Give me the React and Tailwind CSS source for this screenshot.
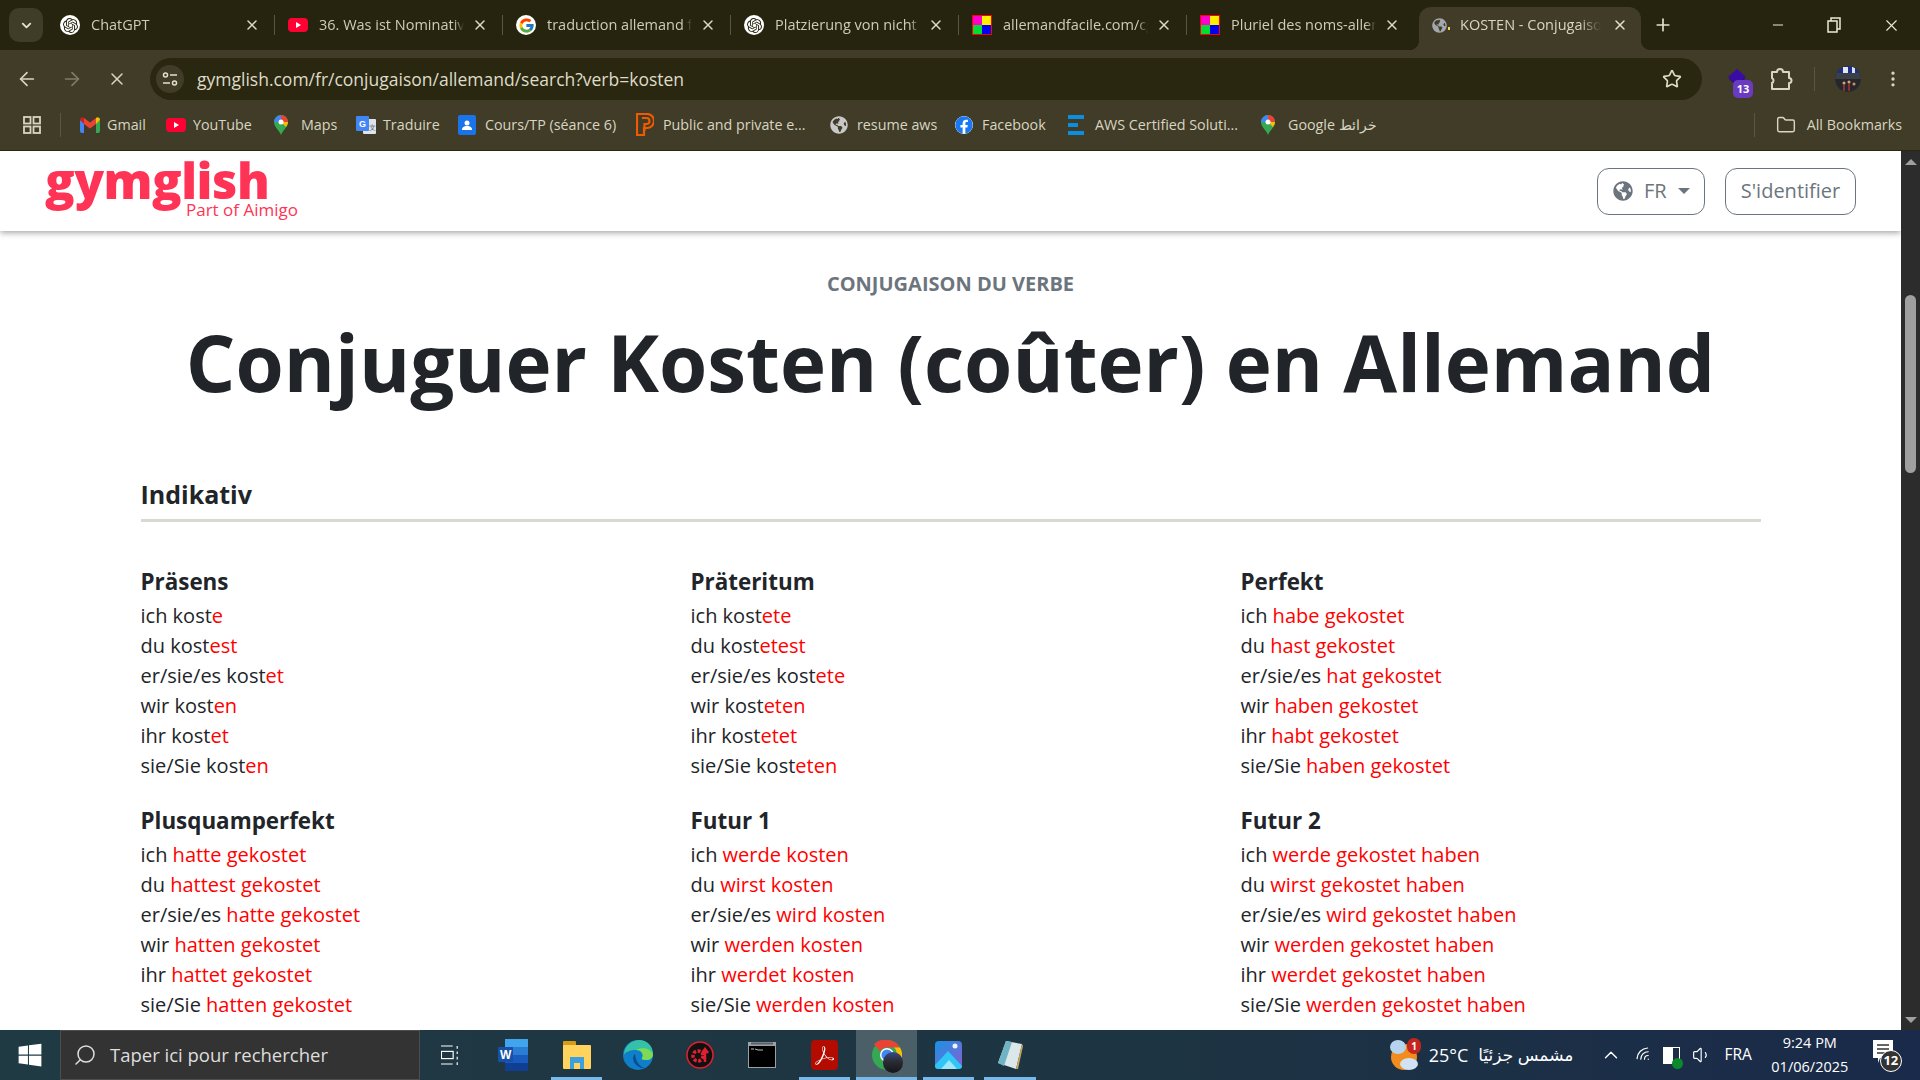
import React from "react";
import { SiOpenai, SiAdobeacrobatreader } from "react-icons/si";
import { FcGoogle } from "react-icons/fc";
import { FaFacebook, FaWindows, FaGlobeAmericas } from "react-icons/fa";
import { ArrowLeft, ArrowRight, X, Plus, Minus, Star, EllipsisVertical, Search, ChevronDown, ChevronUp, Folder, Wifi, Volume1 } from "lucide-react";

const UI = "font-['Open_Sans','Noto_Sans',sans-serif]";

const Gpt = () => (
  <span className="flex h-[20px] w-[20px] items-center justify-center rounded-full bg-white text-[#26240e]"><SiOpenai size={15} /></span>
);
const Yt = ({ s = 20 }) => (
  <svg width={s} height={s} viewBox="0 0 20 20"><rect x="0" y="3" width="20" height="14" rx="4" fill="#ff0033" /><path d="M8 7l5 3-5 3z" fill="#fff" /></svg>
);
const G = () => (
  <span className="flex h-[20px] w-[20px] items-center justify-center rounded-full bg-white"><FcGoogle size={17} /></span>
);
const Mosaic = () => (
  <svg width="20" height="20" viewBox="0 0 20 20"><rect width="20" height="20" fill="#ff0000" /><rect x="1" y="1" width="9" height="9" fill="#ff00cc" /><rect x="10" y="1" width="9" height="9" fill="#ffee00" /><rect x="1" y="10" width="9" height="9" fill="#00dd33" /><rect x="10" y="10" width="9" height="9" fill="#0000ee" /></svg>
);
const Pin = () => (
  <svg width="14" height="20" viewBox="0 0 14 20"><path d="M7 20C5 15 0 12 0 7a7 7 0 0 1 14 0c0 5-5 8-7 13z" fill="#34a853" /><path d="M2 2.500A7 7 0 0 1 7 0v7H0a7 7 0 0 1 2-4.500z" fill="#4285f4" /><path d="M7 0a7 7 0 0 1 7 7H7z" fill="#ea4335" /><path d="M14 7c0 2-1 3.500-2 5L7 7z" fill="#fbbc04" /><circle cx="7" cy="7" r="2.500" fill="#fff" /></svg>
);
const Gmail = () => (
  <svg width="20" height="16" viewBox="0 0 20 16"><path d="M0 3v11a2 2 0 0 0 2 2h2V6z" fill="#4285f4" /><path d="M20 3v11a2 2 0 0 1-2 2h-2V6z" fill="#34a853" /><path d="M16 1v6l-6 4.500L4 7V1l6 4.500z" fill="#ea4335" /><path d="M0 3c0-2.500 2.500-3.500 4-2v6z" fill="#c5221f" /><path d="M20 3c0-2.500-2.500-3.500-4-2v6z" fill="#fbbc04" /></svg>
);
const Translate = () => (
  <svg width="20" height="20" viewBox="0 0 20 20"><rect x="7" y="4" width="13" height="15" rx="1" fill="#dfe3ea" /><rect x="0" y="1" width="13" height="15" rx="1" fill="#4285f4" /><text x="3" y="12" fontSize="9" fontWeight="700" fill="#fff" fontFamily="Liberation Sans">G</text><text x="13" y="15" fontSize="7" fill="#555" fontFamily="Liberation Sans">文</text></svg>
);
const Cours = () => (
  <svg width="18" height="20" viewBox="0 0 18 20"><rect width="18" height="20" rx="2" fill="#1a73e8" /><circle cx="9" cy="8" r="2.500" fill="#fff" /><path d="M4 15c0-3 2-4 5-4s5 1 5 4z" fill="#fff" /></svg>
);
const Pub = () => (
  <svg width="18" height="24" viewBox="0 0 18 24"><path d="M1 1h10a6 6 0 0 1 0 14H8v7H1z" fill="none" stroke="#f05a00" strokeWidth="2.200" /><path d="M6 5h4.500a3 3 0 0 1 0 6H8.500v7" fill="none" stroke="#f05a00" strokeWidth="2.200" /></svg>
);
const Aws = () => (
  <svg width="16" height="20" viewBox="0 0 16 20"><rect width="16" height="4" fill="#0a8fe0" /><rect x="0" y="8" width="10" height="4" fill="#0a8fe0" /><rect y="16" width="16" height="4" fill="#0a8fe0" /></svg>
);
const LoadGlobe = () => (
  <span className="relative flex h-[16px] w-[16px] items-center justify-center text-[#a3a7ae]"><FaGlobeAmericas size={15} /><span className="absolute -right-[3px] bottom-[3px] h-[3px] w-[2px] bg-[#f2d94e]" /></span>
);

const tabs = [
  { icon: <Gpt />, t: "ChatGPT" },
  { icon: <Yt />, t: "36. Was ist Nominativ, Akkusativ" },
  { icon: <G />, t: "traduction allemand français" },
  { icon: <Gpt />, t: "Platzierung von nicht" },
  { icon: <Mosaic />, t: "allemandfacile.com/cgi2/myexam" },
  { icon: <Mosaic />, t: "Pluriel des noms-allemand" },
];

function Tab({ icon, t, last }) {
  return (
    <div className="relative flex h-[42px] w-[228px] shrink-0 items-center pl-[13px]">
      <span className="flex w-[31px] shrink-0">{icon}</span>
      <span className="w-[145px] overflow-hidden whitespace-nowrap text-[14.5px] text-[#cfcbb6] [mask-image:linear-gradient(to_right,black_93%,transparent)]">{t}</span>
      <span className="ml-[6px] flex w-[20px] justify-center text-[#dcd9c6]"><X size={16} strokeWidth={2.2} /></span>
      {!last && <span className="absolute right-0 top-[11px] h-[20px] w-px bg-[#5a5740]" />}
    </div>
  );
}

const marks = [
  { icon: <Gmail />, t: "Gmail", w: "w-[86px]" },
  { icon: <Yt />, t: "YouTube", w: "w-[108px]" },
  { icon: <Pin />, t: "Maps", w: "w-[82px]" },
  { icon: <Translate />, t: "Traduire", w: "w-[102px]" },
  { icon: <Cours />, t: "Cours/TP (séance 6)", w: "w-[178px]" },
  { icon: <Pub />, t: "Public and private e...", w: "w-[194px]" },
  { icon: <FaGlobeAmericas size={18} className="text-[#c8c8c8]" />, t: "resume aws", w: "w-[125px]" },
  { icon: <FaFacebook size={18} className="rounded-full bg-white text-[#1877f2]" />, t: "Facebook", w: "w-[113px]" },
  { icon: <Aws />, t: "AWS Certified Soluti...", w: "w-[193px]" },
  { icon: <Pin />, t: "Google خرائط", w: "w-[120px]" },
];

const SiteIcon = () => (
  <svg width="16" height="16" viewBox="0 0 16 16" fill="none" stroke="currentColor" strokeWidth="1.500"><circle cx="3.500" cy="4" r="2" /><path d="M8 4h7M1 12h7" /><circle cx="12.500" cy="12" r="2" /></svg>
);
const PuzzleIcon = () => (
  <svg width="24" height="26" viewBox="0 0 24 26" fill="none" stroke="currentColor" strokeWidth="2" strokeLinejoin="round"><path d="M3 6h5a3 3 0 0 1 6 0h6v6a2.500 2.500 0 0 1 0 5v6H3v-6a2.800 2.800 0 0 0 0-5z" /></svg>
);
const Avatar = () => (
  <svg width="26" height="26" viewBox="0 0 26 26" className="rounded-full">
    <rect width="26" height="26" fill="#25272c" />
    <rect y="0" width="26" height="7" fill="#1c2f8a" />
    <rect x="8" y="1" width="5" height="6" fill="#e4e7ee" />
    <rect x="17" y="1" width="3" height="6" fill="#d8e4f2" />
    <rect y="7" width="26" height="6" fill="#3b3f46" />
    <circle cx="9" cy="17" r="1.500" fill="#e0a070" />
    <circle cx="14" cy="16" r="1.500" fill="#e0a070" />
    <circle cx="19" cy="18" r="1.500" fill="#d88a60" />
    <path d="M9 19v6M14 18v7" stroke="#a33" strokeWidth="1.500" />
  </svg>
);

function ChromeTop() {
  return (
    <div className={`${UI} shrink-0`}>
      <div className="flex h-[50px] items-end bg-[#26240e]">
        <div className="mb-[8px] ml-[9px] mr-[4px] flex h-[34px] w-[34px] items-center justify-center rounded-[10px] bg-[#3f3c27] text-[#e3e0cc]"><ChevronDown size={15} strokeWidth={3} /></div>
        {tabs.map((x, i) => <div key={i} className="mb-[4px]"><Tab {...x} last={i === 5} /></div>)}
        <div className="relative ml-[4px] flex h-[43px] w-[222px] shrink-0 items-center rounded-t-[12px] bg-[#403c27] pb-[7px] pl-[12px]">
          <span className="absolute -left-[10px] bottom-0 h-[10px] w-[10px] bg-[radial-gradient(circle_at_0_0,#26240e_10px,#403c27_10.500px)]" />
          <span className="absolute -right-[10px] bottom-0 h-[10px] w-[10px] bg-[radial-gradient(circle_at_100%_0,#26240e_10px,#403c27_10.500px)]" />
          <span className="flex w-[29px] shrink-0"><LoadGlobe /></span>
          <span className="w-[141px] overflow-hidden whitespace-nowrap text-[14.5px] text-[#d8d5c2] [mask-image:linear-gradient(to_right,black_85%,transparent)]">KOSTEN - Conjugaison</span>
          <span className="ml-[9px] flex w-[20px] justify-center text-[#e3e0cc]"><X size={16} strokeWidth={2.2} /></span>
        </div>
        <div className="mb-[15px] ml-[12px] text-[#e3e0cc]"><Plus size={20} /></div>
        <div className="ml-auto flex h-[50px] items-center text-[#ece9d8]">
          <span className="flex w-[56px] justify-center"><Minus size={16} strokeWidth={1.5} /></span>
          <span className="flex w-[56px] justify-center">
            <svg width="14" height="16" viewBox="0 0 14 16" fill="none" stroke="currentColor" strokeWidth="1.500"><rect x="1" y="4" width="9" height="11" /><path d="M4 4V1h9v11h-3" /></svg>
          </span>
          <span className="flex w-[58px] justify-center"><X size={19} strokeWidth={1.4} /></span>
        </div>
      </div>
      <div className="flex h-[50px] items-end bg-[#403c27] pb-0">
        <div className="flex h-[42px] w-[150px] items-center text-[#d8d5c2]">
          <span className="ml-[16px] flex w-[45px] justify-start"><ArrowLeft size={22} strokeWidth={1.8} /></span>
          <span className="flex w-[46px] justify-start text-[#807c66]"><ArrowRight size={22} strokeWidth={1.8} /></span>
          <span className="flex justify-start"><X size={20} strokeWidth={1.8} /></span>
        </div>
        <div className="flex h-[42px] w-[1552px] items-center rounded-full bg-[#2a2710]">
          <span className="ml-[6px] flex h-[28px] w-[28px] items-center justify-center rounded-full bg-[#403c27] text-[#e3e0cc]"><SiteIcon /></span>
          <span className="ml-[13px] text-[17.500px] text-[#dedbc8]">gymglish.com/fr/conjugaison/allemand/search?verb=kosten</span>
          <span className="ml-auto mr-[20px] text-[#dedbc8]"><Star size={20} strokeWidth={2} /></span>
        </div>
        <div className="flex h-[42px] flex-1 items-center text-[#d8d5c2]">
          <span className="relative ml-[24px] flex h-[24px] w-[22px] items-center">
            <svg width="22" height="22" viewBox="0 0 22 22"><path d="M3 11l8 7 8-7-8-7z" fill="#2a0a8a" /><path d="M11 1l9 8-9 8-9-8z" fill="#3a0ca3" /></svg>
            <span className="absolute -bottom-[7px] left-[7px] flex h-[18px] w-[20px] items-center justify-center rounded-[5px] bg-[#6a3bc0] text-[11px] font-bold text-white">13</span>
          </span>
          <span className="ml-[21px] flex w-[24px] justify-center"><PuzzleIcon /></span>
          <span className="ml-[21px] h-[24px] w-px bg-[#5a5740]" />
          <span className="ml-[20px] flex h-[26px] w-[26px] overflow-hidden rounded-full"><Avatar /></span>
          <span className="ml-[22px] flex justify-center"><EllipsisVertical size={20} /></span>
        </div>
      </div>
      <div className="flex h-[50px] items-center bg-[#403c27] pb-[1px] text-[14.300px] text-[#d8d5c2]">
        <svg className="ml-[23px]" width="18" height="18" viewBox="0 0 18 18" fill="none" stroke="currentColor" strokeWidth="1.800"><rect x="1" y="1" width="6.500" height="6.500" /><rect x="10.500" y="1" width="6.500" height="6.500" /><rect x="1" y="10.500" width="6.500" height="6.500" /><rect x="10.500" y="10.500" width="6.500" height="6.500" /></svg>
        <span className="ml-[19px] mr-[19px] h-[24px] w-px bg-[#5a5740]" />
        {marks.map((m) => (
          <div key={m.t} className={`flex items-center ${m.w} shrink-0`}>
            <span className="flex w-[27px] shrink-0 items-center">{m.icon}</span>
            <span className="whitespace-nowrap">{m.t}</span>
          </div>
        ))}
        <span className="ml-auto h-[24px] w-px bg-[#5a5740]" />
        <span className="ml-[21px] flex w-[31px] items-center"><Folder size={20} strokeWidth={1.7} /></span>
        <span className="mr-[18px] whitespace-nowrap">All Bookmarks</span>
      </div>
      <div className="h-px bg-[#2a2710]" />
    </div>
  );
}

const P = ["ich", "du", "er/sie/es", "wir", "ihr", "sie/Sie"];
const blocks = [
  { h: "Präsens", s: "kost", e: ["e", "est", "et", "en", "et", "en"] },
  { h: "Präteritum", s: "kost", e: ["ete", "etest", "ete", "eten", "etet", "eten"] },
  { h: "Perfekt", s: "", e: ["habe gekostet", "hast gekostet", "hat gekostet", "haben gekostet", "habt gekostet", "haben gekostet"] },
  { h: "Plusquamperfekt", s: "", e: ["hatte gekostet", "hattest gekostet", "hatte gekostet", "hatten gekostet", "hattet gekostet", "hatten gekostet"] },
  { h: "Futur 1", s: "", e: ["werde kosten", "wirst kosten", "wird kosten", "werden kosten", "werdet kosten", "werden kosten"] },
  { h: "Futur 2", s: "", e: ["werde gekostet haben", "wirst gekostet haben", "wird gekostet haben", "werden gekostet haben", "werdet gekostet haben", "werden gekostet haben"] },
];

function Block({ h, s, e }) {
  return (
    <div>
      <h3 className="mb-[1px] h-[37px] text-[22.400px] font-bold leading-[38px] text-[#212529]">{h}</h3>
      {P.map((p, i) => (
        <div key={i} className="h-[30px] text-[20px] leading-[30px] text-[#212529]">
          {p} {s}<span className="text-[#ff0000]">{e[i]}</span>
        </div>
      ))}
    </div>
  );
}

function Page() {
  return (
    <div className="flex min-h-0 flex-1 bg-white font-['Open_Sans',sans-serif]">
      <div className="min-w-0 flex-1 overflow-hidden">
        <header className="flex h-[80px] items-center bg-white pl-[45px] pr-[45px] shadow-[0_2px_6px_rgba(0,0,0,0.35)]">
          <div className="relative h-[72px] w-[300px]">
            <div className="absolute left-0 -top-[6px] text-[49px] font-extrabold leading-[62px] tracking-[-0.5px] text-[#ff3355]">gymglish</div>
            <div className="absolute left-[141px] top-[43px] text-[17px] leading-[24px] text-[#ff3355]">Part of Aimigo</div>
          </div>
          <div className="ml-auto flex h-[47px] w-[108px] items-center rounded-[12px] border border-[#6c757d] pl-[15px] text-[20px] text-[#6c757d]">
            <FaGlobeAmericas size={20} />
            <span className="ml-[11px]">FR</span>
            <span className="ml-[11px] h-0 w-0 border-x-[6px] border-t-[6px] border-x-transparent border-t-[#6c757d]" />
          </div>
          <div className="ml-[20px] flex h-[47px] w-[131px] items-center justify-center rounded-[12px] border border-[#6c757d] text-[20px] text-[#6c757d]">S'identifier</div>
        </header>
        <main className="text-center">
          <div className="mt-[39px] text-[20px] font-bold leading-[28px] text-[#6c757d]">CONJUGAISON DU VERBE</div>
          <h1 className="mt-[17px] text-[78px] font-bold leading-[94px] text-[#212529]">Conjuguer Kosten (coûter) en Allemand</h1>
        </main>
        <section className="ml-[140.500px] mt-[67px] w-[1620.500px]">
          <h2 className="h-[36px] text-[25px] font-bold leading-[36px] text-[#212529]">Indikativ</h2>
          <div className="mt-[7px] h-[3px] bg-[#d8d8d4]" />
          <div className="mt-[41px] grid grid-cols-[550px_550px_520px] gap-y-[21.400px]">
            {blocks.map((b) => <Block key={b.h} {...b} />)}
          </div>
        </section>
      </div>
      <div className="flex w-[19px] shrink-0 flex-col items-center bg-[#2c2c2c]">
        <span className="mt-[8px] h-0 w-0 border-x-[6px] border-b-[6px] border-x-transparent border-b-[#a0a0a0]" />
        <span className="mt-[130px] h-[178px] w-[11px] rounded-full bg-[#9f9f9f]" />
        <span className="mt-auto mb-[7px] h-0 w-0 border-x-[6px] border-t-[6px] border-x-transparent border-t-[#a0a0a0]" />
      </div>
    </div>
  );
}

const Word = () => (
  <svg width="30" height="32" viewBox="0 0 30 32"><rect x="7" y="0" width="23" height="8" fill="#41a5ee" /><rect x="7" y="8" width="23" height="8" fill="#2b7cd3" /><rect x="7" y="16" width="23" height="8" fill="#185abd" /><rect x="7" y="24" width="23" height="8" fill="#103f91" /><rect x="0" y="8" width="15" height="15" rx="1" fill="#1650a8" /><text x="2" y="20" fontSize="12" fontWeight="700" fill="#fff" fontFamily="Liberation Sans">W</text></svg>
);
const Explorer = () => (
  <svg width="28" height="28" viewBox="0 0 28 28"><rect x="0" y="0" width="13" height="6" rx="1" fill="#d99a14" /><rect x="0" y="4" width="28" height="24" rx="1" fill="#ffd35c" /><rect x="7" y="16" width="14" height="12" fill="#3b9fe0" /><rect x="11" y="22" width="6" height="6" fill="#ffd35c" /></svg>
);
const Edge = () => (
  <svg width="30" height="30" viewBox="0 0 30 30"><circle cx="15" cy="15" r="15" fill="#0f7fc9" /><path d="M1 15C1 5 10 0 16 0c8 0 14 6 14 14 0 4-3 6-7 6-3 0-5-1-4-2 2-3 0-8-6-8-6 0-11 2-12 5z" fill="#35c1a8" /><path d="M30 14c0 4-3 6-7 6-3 0-5-1-4-2 2-3 0-8-6-8 6-3 14-2 17 4z" fill="#7ed957" /><path d="M10 18c0 6 6 11 12 10-5-1-9-6-10-14-1 1-2 2-2 4z" fill="#0a4f94" /></svg>
);
const Driver = () => (
  <svg width="28" height="28" viewBox="0 0 28 28"><circle cx="14" cy="14" r="13" fill="#111" stroke="#e02030" strokeWidth="1.500" /><circle cx="12" cy="15" r="5" fill="none" stroke="#e02030" strokeWidth="3.500" strokeDasharray="3 1.500" /><path d="M19 21V10M16 12l3-4 3 4" stroke="#e02030" strokeWidth="2.500" fill="none" /></svg>
);
const Cmd = () => (
  <svg width="28" height="26" viewBox="0 0 28 26"><rect width="28" height="26" fill="#9aa0a6" /><rect x="1" y="4" width="26" height="21" fill="#000" /><path d="M3 1.500h22" stroke="#5a6066" strokeWidth="2" /><path d="M3 7h3M7 7l3 1h5" stroke="#bbb" fill="none" /></svg>
);
const Chrome = () => (
  <span className="relative flex h-[30px] w-[30px]">
    <svg width="30" height="30" viewBox="0 0 30 30"><circle cx="15" cy="15" r="15" fill="#34a853" /><path d="M15 0a15 15 0 0 1 13 7.500H15a7.500 7.500 0 0 0-7 4L2 4A15 15 0 0 1 15 0z" fill="#ea4335" /><path d="M28 7.500A15 15 0 0 1 15 30l7-11a7.500 7.500 0 0 0 0-11.500z" fill="#fbbc04" /><circle cx="15" cy="15" r="7" fill="#fff" /><circle cx="15" cy="15" r="5.500" fill="#4285f4" /></svg>
    <span className="absolute -bottom-[3px] left-[11px] h-[21px] w-[20px] rounded-full bg-[linear-gradient(180deg,#3a4a8a,#2a2c32_45%,#15161a)]" />
  </span>
);
const Photos = () => (
  <svg width="27" height="28" viewBox="0 0 27 28"><defs><linearGradient id="ph" x1="0" y1="0" x2="1" y2="1"><stop offset="0" stopColor="#1793e6" /><stop offset="1" stopColor="#8a5fd0" /></linearGradient></defs><rect width="27" height="28" rx="4" fill="url(#ph)" /><path d="M0 24l13-14 14 15v0a3 3 0 0 1-3 3H3a3 3 0 0 1-3-3z" fill="#2fc7f5" /><path d="M6 28l8-9 8 9z" fill="#9fe6ff" /><circle cx="20" cy="5" r="2.500" fill="#e8f4ff" /></svg>
);
const Note = () => (
  <svg width="28" height="30" viewBox="0 0 28 30"><path d="M10 1l16 3-6 25-18-6z" fill="#dce7ea" /><path d="M10 1l6 1-8 24-6-3z" fill="#6fb4c4" /><path d="M20 29l6-25 1 2-5 23z" fill="#c9a860" /></svg>
);

const bar = [
  { i: <Word />, on: false, w: "ml-[25px] w-[58px]" },
  { i: <Explorer />, on: true, w: "ml-[9px] w-[51px]" },
  { i: <Edge />, on: false, w: "ml-[10px] w-[51px]" },
  { i: <Driver />, on: false, w: "ml-[11px] w-[51px]" },
  { i: <Cmd />, on: false, w: "ml-[11px] w-[51px]" },
  { i: <span className="flex h-[30px] w-[27px] items-center justify-center rounded-[4px] bg-[#b30b00] text-white"><SiAdobeacrobatreader size={19} /></span>, on: true, w: "ml-[12px] w-[51px]" },
];

function Taskbar() {
  return (
    <div className={`${UI} flex h-[50px] shrink-0 items-center bg-[linear-gradient(90deg,#203a43,#1d3442_60%,#1a2a4a)] text-white`}>
      <span className="flex w-[60px] justify-center"><FaWindows size={26} /></span>
      <div className="flex h-[50px] w-[360px] items-center border border-[#4d4d4d] bg-[#333333] pl-[12px] text-[18.500px] text-[#dedede]">
        <Search size={24} strokeWidth={1.5} className="-scale-x-100" />
        <span className="ml-[13px]">Taper ici pour rechercher</span>
      </div>
      <span className="ml-[21px] flex w-[18px] justify-center">
        <svg width="20" height="22" viewBox="0 0 20 22" fill="none" stroke="#fff" strokeWidth="1.300"><path d="M0 1h13M0 21h13" /><rect x="0.500" y="7" width="13" height="8" /><path d="M18 1v3M18 7v3M18 13v3M18 19v3" /></svg>
      </span>
      {bar.map((b, k) => (
        <span key={k} className={`relative flex h-[50px] items-center justify-center ${b.w}`}>
          {b.i}
          {b.on && <span className="absolute bottom-0 left-0 right-0 h-[3px] bg-[#76b9ed]" />}
        </span>
      ))}
      <span className="relative ml-[6px] flex h-[50px] w-[61px] items-center justify-center bg-[#4b5f68]"><Chrome /><span className="absolute bottom-0 left-0 right-0 h-[3px] bg-[#76b9ed]" /></span>
      <span className="relative ml-[6px] flex h-[50px] w-[51px] items-center justify-center"><Photos /><span className="absolute bottom-0 left-0 right-0 h-[3px] bg-[#76b9ed]" /></span>
      <span className="relative ml-[10px] flex h-[50px] w-[52px] items-center justify-center"><Note /><span className="absolute bottom-0 left-0 right-0 h-[3px] bg-[#76b9ed]" /></span>
      <span className="relative ml-[353px] h-[32px] w-[30px]">
        <svg width="30" height="32" viewBox="0 0 30 32"><circle cx="15" cy="18" r="13" fill="#f28c1e" /><ellipse cx="9" cy="8" rx="8" ry="7" fill="#b6d4ee" /><ellipse cx="20" cy="25" rx="9" ry="6" fill="#cfe3f5" /></svg>
        <span className="absolute -right-[2px] -top-[1px] flex h-[16px] w-[14px] items-center justify-center rounded-full bg-[#c4261d] text-[10px] font-bold">1</span>
      </span>
      <span className="ml-[5px] text-[18px]">&nbsp;25°C</span>
      <span dir="rtl" className="ml-[10px] font-['Noto_Sans','DejaVu_Sans',sans-serif] text-[17px]">مشمس جزئيًا</span>
      <span className="ml-[27px]"><ChevronUp size={22} strokeWidth={1.5} /></span>
      <span className="ml-[13px]"><Wifi size={18} strokeWidth={1.6} className="-rotate-45" /></span>
      <span className="relative ml-[10px] h-[17px] w-[17px] border border-white bg-[linear-gradient(90deg,#fff_60%,transparent_60%)]">
        <span className="absolute -bottom-[6px] -right-[4px] h-[11px] w-[11px] rounded-full bg-[#0a8a2a]" />
      </span>
      <span className="ml-[12px]"><Volume1 size={20} strokeWidth={1.4} /></span>
      <span className="ml-[12px] text-[15.500px]">FRA</span>
      <span className="ml-[17px] flex w-[82px] flex-col items-center text-[14.500px] leading-[24px]">
        <span>9:24 PM</span><span>01/06/2025</span>
      </span>
      <span className="relative ml-[22px] flex h-[30px] w-[20px] items-start">
        <svg width="20" height="23" viewBox="0 0 20 23"><path d="M0 0h20v18H7l-2 5v-5H0z" fill="#fff" /><path d="M4 5h12M4 9h12M4 13h12" stroke="#333" strokeWidth="1.300" /></svg>
        <span className="absolute -bottom-[2px] left-[7px] flex h-[22px] w-[22px] items-center justify-center rounded-full border border-white bg-[#333] text-[13px] font-bold">12</span>
      </span>
    </div>
  );
}

export default function App() {
  return (
    <div className="flex h-screen w-screen flex-col overflow-hidden">
      <ChromeTop />
      <Page />
      <Taskbar />
    </div>
  );
}
